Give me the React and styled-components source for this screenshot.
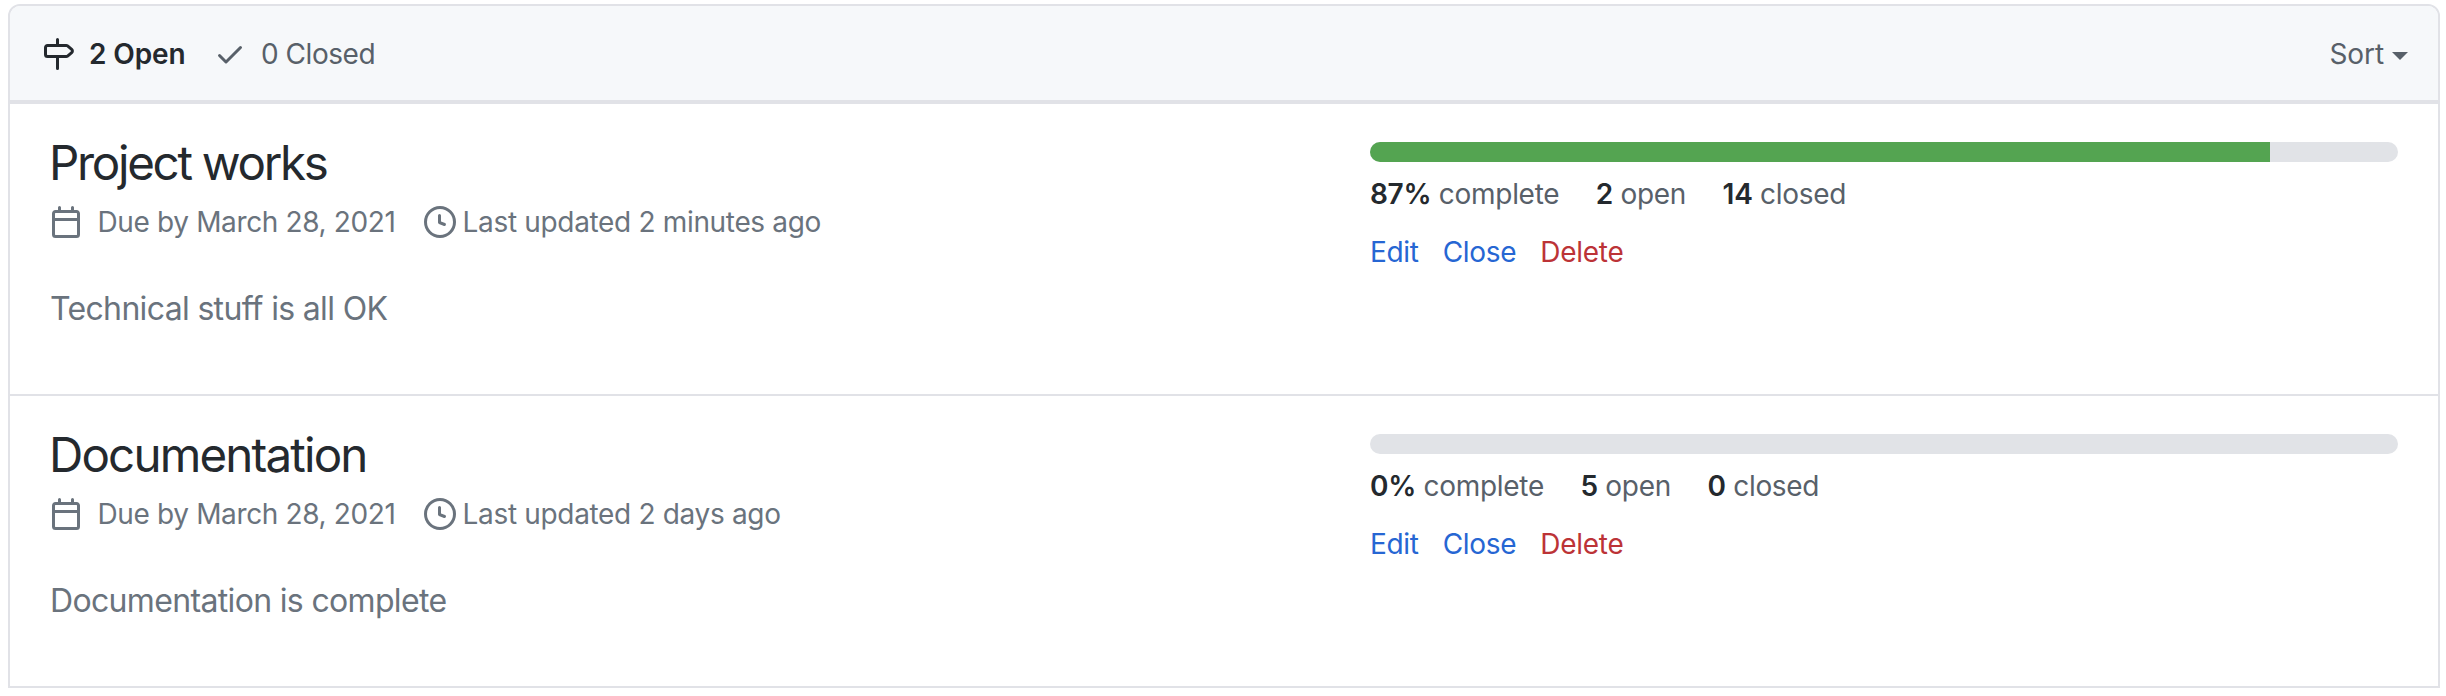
import React from "react";
import styled, { createGlobalStyle } from "styled-components";

const color = {
  text: "#24292e",
  secondary: "#586069",
  muted: "#6a737d",
  border: "#e1e2e7",
  track: "#e1e3e7",
  link: "#2666d3",
  danger: "#bc3337",
  success: "#54a451",
  headerBg: "#f6f8fa",
};

const GlobalStyle = createGlobalStyle`
  * { box-sizing: border-box; }
  body {
    margin: 0;
    background: #fff;
    color: ${color.text};
    font: 430 28px/42px Inter, "Liberation Sans", sans-serif;
    letter-spacing: -0.3px;
  }
`;

const Box = styled.section`
  margin: 4px 6px 0 8px;
  border: 2px solid ${color.border};
  border-radius: 12px 12px 0 0;
`;

const Header = styled.header`
  display: flex;
  align-items: center;
  height: 98px;
  padding: 2px 30px 0 32px;
  background: ${color.headerBg};
  border-bottom: 4px solid ${color.border};
  border-radius: 10px 10px 0 0;
`;

const StateTab = styled.a`
  display: flex;
  align-items: center;
  gap: 15px;
  margin-right: 28.5px;
  color: ${(p) => (p.$selected ? color.text : color.secondary)};
  font-weight: ${(p) => (p.$selected ? 600 : 430)};
  letter-spacing: ${(p) => (p.$selected ? -0.12 : -0.45)}px;
`;

const SortButton = styled.div`
  display: flex;
  align-items: center;
  gap: 8px;
  margin-left: auto;
  color: ${color.secondary};
  letter-spacing: -0.1px;
`;

const Caret = styled.span`
  margin-top: 4px;
  border: 8px solid transparent;
  border-top-color: currentColor;
  border-bottom-width: 0;
`;

const Row = styled.article`
  display: flex;
  justify-content: space-between;
  height: ${(p) => (p.$last ? 290 : 292)}px;
  padding: 0 40px;
  border-bottom: ${(p) => (p.$last ? "0" : `2px solid ${color.border}`)};
`;

const Summary = styled.div`
  padding-top: 29px;
`;

const Title = styled.h2`
  margin: 0 0 0 -1px;
  font-size: 47.5px;
  line-height: 60px;
  font-weight: 430;
  letter-spacing: ${(p) => p.$tracking}px;
`;

const Meta = styled.div`
  display: flex;
  gap: 28px;
  margin-top: 8px;
  color: ${color.muted};
`;

const MetaItem = styled.span`
  display: flex;
  align-items: center;
  gap: ${(p) => p.$gap}px;
  letter-spacing: ${(p) => p.$tracking}px;
`;

const Description = styled.p`
  margin: 42px 0 0;
  color: ${color.muted};
  font-size: 32px;
  line-height: 48px;
  letter-spacing: -0.66px;
`;

const Stats = styled.div`
  width: 1028px;
  padding-top: 38px;
`;

const Progress = styled.div`
  height: 20px;
  overflow: hidden;
  background: ${color.track};
  border-radius: 12px;
`;

const ProgressFill = styled.div`
  height: 100%;
  background: ${color.success};
`;

const Counts = styled.div`
  display: flex;
  gap: 36.5px;
  margin-top: 11px;
  color: ${color.secondary};
`;

const Count = styled.span`
  strong {
    color: ${color.text};
    font-weight: 600;
  }
`;

const Actions = styled.div`
  display: flex;
  gap: 24px;
  margin-top: 16px;
`;

const Action = styled.a`
  color: ${(p) => (p.$danger ? color.danger : color.link)};
`;

const Svg = styled.svg`
  display: block;
  width: 32px;
  height: 32px;
  flex: none;
  fill: currentColor;
`;

const paths = {
  milestone:
    "M7.75 0a.75.75 0 01.75.75V3h3.634c.414 0 .814.147 1.13.414l2.07 1.75a1.75 1.75 0 010 2.672l-2.07 1.75a1.75 1.75 0 01-1.13.414H8.5v5.25a.75.75 0 11-1.5 0V10H2.75A1.75 1.75 0 011 8.25v-3.5C1 3.784 1.784 3 2.75 3H7V.75A.75.75 0 017.75 0zm0 8.5h4.384a.25.25 0 00.161-.06l2.07-1.75a.25.25 0 000-.38l-2.07-1.75a.25.25 0 00-.161-.06H2.75a.25.25 0 00-.25.25v3.5c0 .138.112.25.25.25h5z",
  check:
    "M13.78 4.22a.75.75 0 010 1.06l-7.25 7.25a.75.75 0 01-1.06 0L2.22 9.28a.75.75 0 011.06-1.06L6 10.94l6.72-6.72a.75.75 0 011.06 0z",
  calendar:
    "M4.75 0a.75.75 0 01.75.75V2h5V.75a.75.75 0 011.5 0V2h1.25c.966 0 1.75.784 1.75 1.75v10.5A1.75 1.75 0 0113.25 16H2.75A1.75 1.75 0 011 14.25V3.75C1 2.784 1.784 2 2.75 2H4V.75A.75.75 0 014.75 0zm0 3.5h8.5a.25.25 0 01.25.25V6h-11V3.75a.25.25 0 01.25-.25h2zm-2.25 4v6.75c0 .138.112.25.25.25h10.5a.25.25 0 00.25-.25V7.5h-11z",
  clock:
    "M1.5 8a6.5 6.5 0 1113 0 6.5 6.5 0 01-13 0zM8 0a8 8 0 100 16A8 8 0 008 0zm.5 4.75a.75.75 0 00-1.5 0v3.5a.75.75 0 00.471.696l2.5 1a.75.75 0 00.557-1.392L8.5 7.742V4.75z",
};

const Icon = ({ name }) => (
  <Svg viewBox="0 0 16 16" aria-hidden="true">
    <path fillRule="evenodd" clipRule="evenodd" d={paths[name]} />
  </Svg>
);

const milestones = [
  {
    title: "Project works",
    tracking: -2.3,
    updated: "Last updated 2 minutes ago",
    description: "Technical stuff is all OK",
    percent: 87,
    fill: 87.5,
    open: 2,
    closed: 14,
  },
  {
    title: "Documentation",
    tracking: -1.83,
    updated: "Last updated 2 days ago",
    description: "Documentation is complete",
    percent: 0,
    fill: 0,
    open: 5,
    closed: 0,
  },
];

const Milestone = ({ item, last }) => (
  <Row $last={last}>
    <Summary>
      <Title $tracking={item.tracking}>{item.title}</Title>
      <Meta>
        <MetaItem $gap={15.5} $tracking={-0.36}>
          <Icon name="calendar" />
          Due by March 28, 2021
        </MetaItem>
        <MetaItem $gap={7} $tracking={-0.33}>
          <Icon name="clock" />
          {item.updated}
        </MetaItem>
      </Meta>
      <Description>{item.description}</Description>
    </Summary>
    <Stats>
      <Progress>
        <ProgressFill style={{ width: `${item.fill}%` }} />
      </Progress>
      <Counts>
        <Count><strong>{item.percent}%</strong> complete</Count>
        <Count><strong>{item.open}</strong> open</Count>
        <Count><strong>{item.closed}</strong> closed</Count>
      </Counts>
      <Actions>
        <Action>Edit</Action>
        <Action>Close</Action>
        <Action $danger>Delete</Action>
      </Actions>
    </Stats>
  </Row>
);

export default function App() {
  return (
    <>
      <GlobalStyle />
      <Box>
        <Header>
          <StateTab $selected>
            <Icon name="milestone" />
            2 Open
          </StateTab>
          <StateTab>
            <Icon name="check" />
            0 Closed
          </StateTab>
          <SortButton>
            Sort
            <Caret />
          </SortButton>
        </Header>
        {milestones.map((item, i) => (
          <Milestone key={item.title} item={item} last={i === milestones.length - 1} />
        ))}
      </Box>
    </>
  );
}
